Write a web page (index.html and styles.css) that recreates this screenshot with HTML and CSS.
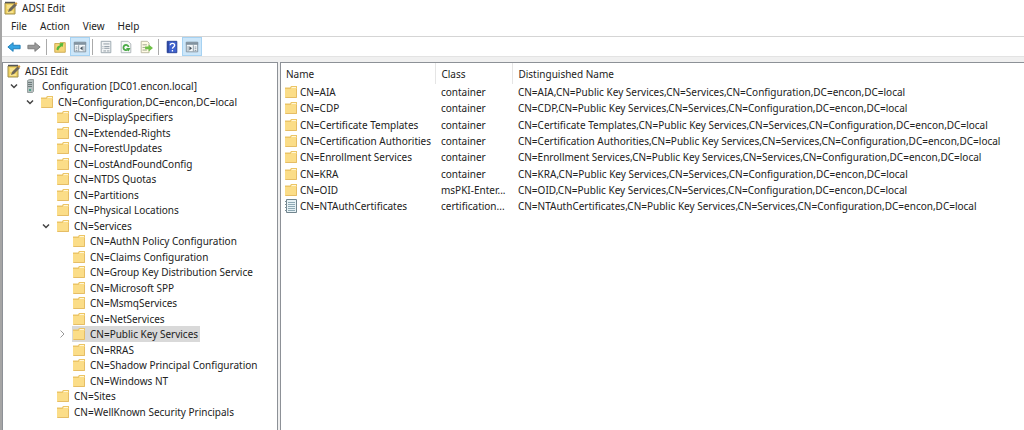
FILE: index.html
```html
<!DOCTYPE html>
<html lang="en">
<head>
    <meta charset="UTF-8">
    <meta name="viewport" content="width=device-width, initial-scale=1.0">
    <title>ADSI Edit</title>
    <link rel="stylesheet" href="styles.css">
</head>
<body>
    <svg class="sprite" aria-hidden="true">
        <symbol id="folder" viewBox="0 0 14 14">
            <path d="M1 2.500h5l1-1.500h6v11.500H1z" fill="#ecc566"/>
            <path d="M7.500 2h4.500v2H7.500z" fill="#fff6d8"/>
            <path d="M1 4h5.500l1-1H13v10H1z" fill="#fbdd88"/>
            <path d="M1.500 12.500h11V3.500" fill="none" stroke="#e5bd66"/>
        </symbol>
        <symbol id="adsi" viewBox="0 0 14 14">
            <path d="M1 2h10v11H1z" fill="#f0d262" stroke="#a08f4c"/>
            <path d="M1 1.500h10" stroke="#555" stroke-width="1.500"/>
            <path d="M3 5h5M3 7h3M3 11h6" stroke="#fff3b8"/>
            <path d="M4 11l1-3 6-6 2 2-6 6z" fill="#6d675a"/>
            <path d="M10.500 2.500l1.500-1.500 1.500 1.500-1.500 1.500z" fill="#d59a3a"/>
        </symbol>
        <symbol id="server" viewBox="0 0 14 14">
            <path d="M3.500 1.500l2-1h4v12l-1 1h-5z" fill="#b5bfbf" stroke="#98a1a0"/>
            <path d="M4 3.500h4M4 5.500h4M4 7.500h4" stroke="#6f7b7c"/>
            <path d="M5 10h2v2H5z" fill="#4fa38c"/>
        </symbol>
        <symbol id="record" viewBox="0 0 14 14">
            <path d="M2.500.5h10v13h-10z" fill="#e6f1f5" stroke="#71858e"/>
            <path d="M4 3.500h7M4 5.500h7M4 7.500h7M4 9.500h7M4 11.500h7" stroke="#8faab5"/>
            <path d="M1 2.500h2M1 5.500h2M1 8.500h2M1 11.500h2" stroke="#7c8e96"/>
        </symbol>
        <symbol id="down" viewBox="0 0 10 10">
            <path d="M2 3.500l3 3 3-3" fill="none" stroke="#444" stroke-width="1.500"/>
        </symbol>
        <symbol id="right" viewBox="0 0 10 10">
            <path d="M3.500 1.500L7 5 3.500 8.500" fill="none" stroke="#999"/>
        </symbol>
    </svg>

    <div class="window">
        <header class="title-bar">
            <svg class="icon"><use href="#adsi"/></svg>
            <span>ADSI Edit</span>
        </header>

        <nav class="menu-bar">
            <button type="button">File</button>
            <button type="button">Action</button>
            <button type="button">View</button>
            <button type="button">Help</button>
        </nav>

        <div class="toolbar">
            <button type="button" aria-label="Back">
                <svg viewBox="0 0 16 16"><path d="M1 8l6-5v3h8v4H7v3z" fill="#35a4e3" stroke="#1979b5"/></svg>
            </button>
            <button type="button" aria-label="Forward">
                <svg viewBox="0 0 16 16"><path d="M15 8L9 3v3H1v4h8v3z" fill="#999" stroke="#777"/></svg>
            </button>
            <span class="divider"></span>
            <button type="button" aria-label="Up one level">
                <svg viewBox="0 0 16 16">
                    <path d="M2 4h5l1-1h6v11H2z" fill="#f5d477" stroke="#c9a64c"/>
                    <path d="M4 11c0-3 1-4 4-5L7 4l5-1-1 5-1-1c-2 1-3 2-4 5z" fill="#56b83c"/>
                </svg>
            </button>
            <button type="button" class="active" aria-label="Show/Hide Console Tree">
                <svg viewBox="0 0 16 16">
                    <path d="M1.500 2.500h13v11h-13z" fill="#f4f7f9" stroke="#7c8c98"/>
                    <path d="M1 4h14" stroke="#8293a0" stroke-width="3"/>
                    <path d="M6.500 6v7M3 8h2M3 10h2M3 12h2M12.500 7v6" stroke="#8293a0"/>
                    <path d="M11 7v5L8 9.500z" fill="#43515c"/>
                </svg>
            </button>
            <span class="divider"></span>
            <button type="button" aria-label="Properties">
                <svg viewBox="0 0 16 16">
                    <path d="M2.500 1.500h11v13h-11z" fill="#f3f5f6" stroke="#94a0a8"/>
                    <path d="M5 4.500h7M4 7.500h1M6 7.500h6M4 9.500h1M6 9.500h6M5 12.500h3M9 12.500h3" stroke="#87949d"/>
                </svg>
            </button>
            <button type="button" aria-label="Refresh">
                <svg viewBox="0 0 16 16">
                    <path d="M2.500 1.500h8l3 3v10h-11z" fill="#f7f8f8" stroke="#a8b0b3"/>
                    <path d="M10 11a3 3 0 1 1 1-3" fill="none" stroke="#48a944" stroke-width="2"/>
                    <path d="M8 9h5l-2 4z" fill="#48a944"/>
                </svg>
            </button>
            <button type="button" aria-label="Export List">
                <svg viewBox="0 0 16 16">
                    <path d="M2.500 1.500h7l2 2v11h-9z" fill="#fffbe5" stroke="#b6b49d"/>
                    <path d="M4 5.500h5M4 8.500h4M4 11.500h5" stroke="#969b83"/>
                    <path d="M7 7.500h4v-2.500l5 4-5 4v-2.500H7z" fill="#6fc047"/>
                </svg>
            </button>
            <span class="divider"></span>
            <button type="button" aria-label="Help">
                <svg viewBox="0 0 16 16">
                    <path d="M2.500 1.500h11v13h-11z" fill="#3f62cf" stroke="#203b91"/>
                    <path d="M3.500 2v12" stroke="#1d327f"/>
                    <path d="M6 6c0-3 5-3 5 0 0 2-2.500 2-2.500 4M8.500 11.500v1.500" fill="none" stroke="#fff" stroke-width="1.500"/>
                </svg>
            </button>
            <button type="button" class="active" aria-label="Show/Hide Action Pane">
                <svg viewBox="0 0 16 16">
                    <path d="M1.500 2.500h13v11h-13z" fill="#f4f7f9" stroke="#7c8c98"/>
                    <path d="M1 4h14" stroke="#8293a0" stroke-width="3"/>
                    <path d="M3.500 7v6M9.500 6v7M11 8h2M11 10h2M11 12h2" stroke="#8293a0"/>
                    <path d="M5 7v5l3-2.500z" fill="#43515c"/>
                </svg>
            </button>
        </div>

        <main class="panes">
            <ul class="tree">
                <li class="root"><svg class="icon"><use href="#adsi"/></svg><span>ADSI Edit</span></li>
                <li class="level-1"><svg class="arrow"><use href="#down"/></svg><span class="node"><svg class="icon"><use href="#server"/></svg>Configuration [DC01.encon.local]</span></li>
                <li class="level-2"><svg class="arrow"><use href="#down"/></svg><span class="node"><svg class="icon"><use href="#folder"/></svg>CN=Configuration,DC=encon,DC=local</span></li>
                <li class="level-3"><span class="node"><svg class="icon"><use href="#folder"/></svg>CN=DisplaySpecifiers</span></li>
                <li class="level-3"><span class="node"><svg class="icon"><use href="#folder"/></svg>CN=Extended-Rights</span></li>
                <li class="level-3"><span class="node"><svg class="icon"><use href="#folder"/></svg>CN=ForestUpdates</span></li>
                <li class="level-3"><span class="node"><svg class="icon"><use href="#folder"/></svg>CN=LostAndFoundConfig</span></li>
                <li class="level-3"><span class="node"><svg class="icon"><use href="#folder"/></svg>CN=NTDS Quotas</span></li>
                <li class="level-3"><span class="node"><svg class="icon"><use href="#folder"/></svg>CN=Partitions</span></li>
                <li class="level-3"><span class="node"><svg class="icon"><use href="#folder"/></svg>CN=Physical Locations</span></li>
                <li class="level-3"><svg class="arrow"><use href="#down"/></svg><span class="node"><svg class="icon"><use href="#folder"/></svg>CN=Services</span></li>
                <li class="level-4"><span class="node"><svg class="icon"><use href="#folder"/></svg>CN=AuthN Policy Configuration</span></li>
                <li class="level-4"><span class="node"><svg class="icon"><use href="#folder"/></svg>CN=Claims Configuration</span></li>
                <li class="level-4"><span class="node"><svg class="icon"><use href="#folder"/></svg>CN=Group Key Distribution Service</span></li>
                <li class="level-4"><span class="node"><svg class="icon"><use href="#folder"/></svg>CN=Microsoft SPP</span></li>
                <li class="level-4"><span class="node"><svg class="icon"><use href="#folder"/></svg>CN=MsmqServices</span></li>
                <li class="level-4"><span class="node"><svg class="icon"><use href="#folder"/></svg>CN=NetServices</span></li>
                <li class="level-4"><svg class="arrow"><use href="#right"/></svg><span class="node selected"><svg class="icon"><use href="#folder"/></svg>CN=Public Key Services</span></li>
                <li class="level-4"><span class="node"><svg class="icon"><use href="#folder"/></svg>CN=RRAS</span></li>
                <li class="level-4"><span class="node"><svg class="icon"><use href="#folder"/></svg>CN=Shadow Principal Configuration</span></li>
                <li class="level-4"><span class="node"><svg class="icon"><use href="#folder"/></svg>CN=Windows NT</span></li>
                <li class="level-3"><span class="node"><svg class="icon"><use href="#folder"/></svg>CN=Sites</span></li>
                <li class="level-3"><span class="node"><svg class="icon"><use href="#folder"/></svg>CN=WellKnown Security Principals</span></li>
            </ul>

            <div class="list">
                <table>
                    <colgroup>
                        <col class="col-name">
                        <col class="col-class">
                        <col>
                    </colgroup>
                    <thead>
                        <tr><th>Name</th><th>Class</th><th>Distinguished Name</th></tr>
                    </thead>
                    <tbody>
                        <tr>
                            <td><span class="item"><svg class="icon"><use href="#folder"/></svg>CN=AIA</span></td>
                            <td>container</td>
                            <td>CN=AIA,CN=Public Key Services,CN=Services,CN=Configuration,DC=encon,DC=local</td>
                        </tr>
                        <tr>
                            <td><span class="item"><svg class="icon"><use href="#folder"/></svg>CN=CDP</span></td>
                            <td>container</td>
                            <td>CN=CDP,CN=Public Key Services,CN=Services,CN=Configuration,DC=encon,DC=local</td>
                        </tr>
                        <tr>
                            <td><span class="item"><svg class="icon"><use href="#folder"/></svg>CN=Certificate Templates</span></td>
                            <td>container</td>
                            <td>CN=Certificate Templates,CN=Public Key Services,CN=Services,CN=Configuration,DC=encon,DC=local</td>
                        </tr>
                        <tr>
                            <td><span class="item"><svg class="icon"><use href="#folder"/></svg>CN=Certification Authorities</span></td>
                            <td>container</td>
                            <td>CN=Certification Authorities,CN=Public Key Services,CN=Services,CN=Configuration,DC=encon,DC=local</td>
                        </tr>
                        <tr>
                            <td><span class="item"><svg class="icon"><use href="#folder"/></svg>CN=Enrollment Services</span></td>
                            <td>container</td>
                            <td>CN=Enrollment Services,CN=Public Key Services,CN=Services,CN=Configuration,DC=encon,DC=local</td>
                        </tr>
                        <tr>
                            <td><span class="item"><svg class="icon"><use href="#folder"/></svg>CN=KRA</span></td>
                            <td>container</td>
                            <td>CN=KRA,CN=Public Key Services,CN=Services,CN=Configuration,DC=encon,DC=local</td>
                        </tr>
                        <tr>
                            <td><span class="item"><svg class="icon"><use href="#folder"/></svg>CN=OID</span></td>
                            <td>msPKI-Enter...</td>
                            <td>CN=OID,CN=Public Key Services,CN=Services,CN=Configuration,DC=encon,DC=local</td>
                        </tr>
                        <tr>
                            <td><span class="item"><svg class="icon"><use href="#record"/></svg>CN=NTAuthCertificates</span></td>
                            <td>certification...</td>
                            <td>CN=NTAuthCertificates,CN=Public Key Services,CN=Services,CN=Configuration,DC=encon,DC=local</td>
                        </tr>
                    </tbody>
                </table>
            </div>
        </main>
    </div>
</body>
</html>
```
FILE: styles.css
```css
* {
    margin: 0;
    padding: 0;
    box-sizing: border-box;
}

body {
    font-family: "Noto Sans", "Open Sans", sans-serif;
    font-size: 10px;
    color: #222;
    background: #fff;
}

button {
    font: inherit;
    color: inherit;
    background: none;
    border: none;
}

svg {
    display: block;
    flex: none;
}

.sprite {
    display: none;
}

.icon {
    width: 14px;
    height: 14px;
}

.window {
    display: flex;
    flex-direction: column;
    min-height: 100vh;
    border-left: 2px solid #a5a5a5;
}

.title-bar {
    display: flex;
    align-items: center;
    gap: 4px;
    height: 16px;
    padding-left: 2px;
}

.menu-bar {
    display: flex;
    align-items: center;
    gap: 13px;
    height: 20px;
    padding-left: 9px;
}

.toolbar {
    display: flex;
    align-items: center;
    height: 21px;
    padding-left: 2px;
    border-top: 1px solid #d5d5d5;
    border-bottom: 1px solid #e3e3e3;
}

.toolbar button {
    display: flex;
    align-items: center;
    justify-content: center;
    width: 20px;
    height: 19px;
}

.toolbar svg {
    width: 14px;
    height: 14px;
}

.toolbar .active {
    background: #cce6f9;
    border: 1px solid #a6d2f2;
}

.divider {
    width: 1px;
    height: 16px;
    margin: 0 3px 0 2px;
    background: #aaa;
}

/* tree and list */
.panes {
    display: flex;
    flex: 1;
    gap: 2px;
    padding-top: 5px;
    background: #f0f0f0;
}

.tree {
    flex: 0 0 27%;
    list-style: none;
    background: #fff;
    border: 1px solid #8d9197;
    border-bottom: none;
}

.tree li {
    display: flex;
    align-items: center;
    height: 15px;
    white-space: nowrap;
}

.tree li:nth-child(even) {
    height: 16px;
}

.tree .root {
    gap: 4px;
    padding-left: 4px;
}

.node {
    display: flex;
    align-items: center;
    gap: 4px;
    height: 100%;
    margin-left: 15px;
    padding-right: 2px;
}

.arrow {
    width: 10px;
    height: 10px;
    margin-right: -10px;
}

.level-1 {
    padding-left: 6px;
}

.level-2 {
    padding-left: 22px;
}

.level-3 {
    padding-left: 38px;
}

.level-4 {
    padding-left: 54px;
}

.selected {
    background: #d9d9d9;
}

.list {
    flex: 1;
    min-width: 0;
    background: #fff;
    border: 1px solid #8d9197;
    border-right: none;
    border-bottom: none;
}

table {
    width: 100%;
    table-layout: fixed;
    border-collapse: collapse;
}

.col-name {
    width: 155px;
}

.col-class {
    width: 77px;
}

th {
    height: 21px;
    padding-left: 5px;
    font-weight: normal;
    text-align: left;
    border-right: 1px solid #e5e5e5;
}

th:last-child {
    border-right: none;
}

td {
    height: 16px;
    padding-left: 5px;
    line-height: 16px;
    white-space: nowrap;
}

tr:nth-child(3n) td {
    height: 17px;
}

td:first-child {
    padding-left: 3px;
}

.item {
    display: flex;
    align-items: center;
    gap: 2px;
}
```
